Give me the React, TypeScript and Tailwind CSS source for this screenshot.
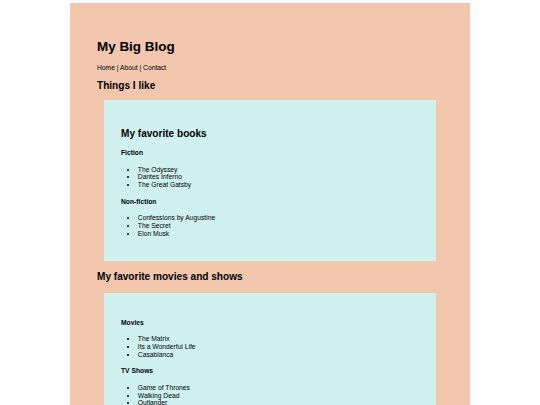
import React from "react";

const H4 = ({ children, mt }: { children: React.ReactNode; mt: string }) => (
  <h4 className={`${mt} text-[6.72px] leading-[7.72px] font-bold`}>{children}</h4>
);

const List = ({ items, mt }: { items: string[]; mt: string }) => (
  <ul className={`${mt} list-disc pl-[16.8px] text-[6.72px] leading-[7.72px]`}>
    {items.map((i) => (
      <li key={i}>{i}</li>
    ))}
  </ul>
);

export default function App() {
  return (
    <div className="min-h-[405px] bg-white pt-[3.36px] font-['Liberation_Sans',Arial,sans-serif] text-black">
      <div className="mx-auto flex w-[400px] flex-col bg-[#f2c7ae] px-[27px] pt-[36px] pb-[27px]">
        <h1 className="text-[13.44px] leading-[15.44px] font-bold">My Big Blog</h1>
        <p className="mt-[9px] text-[6.72px] leading-[7.72px]">Home | About | Contact</p>
        <h2 className="mt-[8.2px] text-[10.08px] leading-[11.58px] font-bold">Things I like</h2>

        <div className="mx-[7px] mt-[8.7px] flex flex-col bg-[#cff2f1] px-[17px] pt-[28px] pb-[23.8px]">
          <h2 className="text-[10.08px] leading-[11.58px] font-bold">My favorite books</h2>
          <H4 mt="mt-[9.9px]">Fiction</H4>
          <List mt="mt-[8.6px]" items={["The Odyssey", "Dantes Inferno", "The Great Gatsby"]} />
          <H4 mt="mt-[8.8px]">Non-fiction</H4>
          <List mt="mt-[8.7px]" items={["Confessions by Augustine", "The Secret", "Elon Musk"]} />
        </div>

        <h2 className="mt-[9.7px] text-[10.08px] leading-[11.58px] font-bold">My favorite movies and shows</h2>

        <div className="mx-[7px] mt-[10.7px] flex flex-col bg-[#cff2f1] px-[17px] pt-[25.8px] pb-[24.3px]">
          <H4 mt="mt-0">Movies</H4>
          <List mt="mt-[8.9px]" items={["The Matrix", "Its a Wonderful Life", "Casablanca"]} />
          <H4 mt="mt-[8.8px]">TV Shows</H4>
          <List mt="mt-[8.7px]" items={["Game of Thrones", "Walking Dead", "Outlander"]} />
        </div>
      </div>
    </div>
  );
}
